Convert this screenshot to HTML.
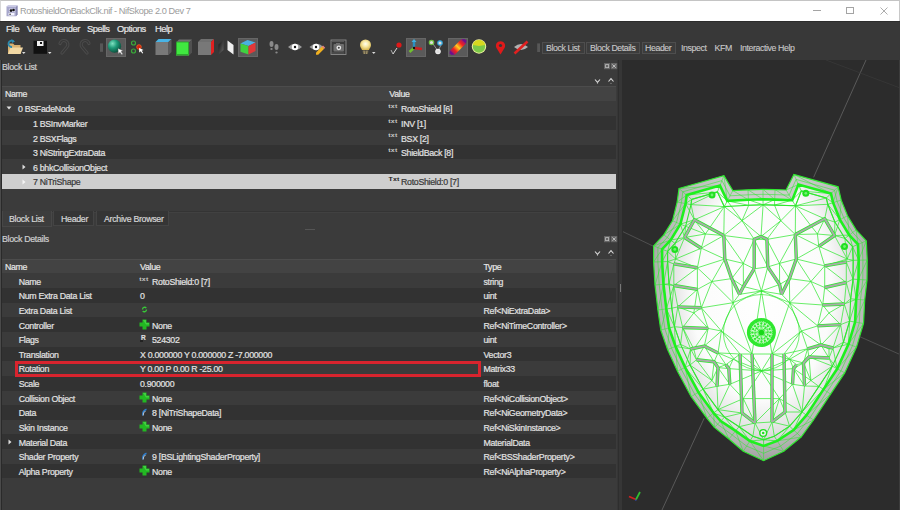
<!DOCTYPE html><html><head><meta charset="utf-8"><style>
*{margin:0;padding:0;box-sizing:border-box}
html,body{width:900px;height:510px;overflow:hidden;background:#3b3b3b;font-family:"Liberation Sans",sans-serif;font-size:9px;letter-spacing:-0.35px}
.a{position:absolute}
.t{position:absolute;white-space:nowrap;line-height:10px;-webkit-text-stroke:0.2px currentColor}
#title{left:0;top:0;width:900px;height:21px;background:#fff;border-top:1px solid #c4c4c4;border-right:1px solid #c8c8c8;border-left:1px solid #d8d8d8}
.hdr{position:absolute;left:2px;width:614px;background:#434343}
.rw{position:absolute;left:2px;width:614px}
.odd{background:#323232}
.sel{background:#cecece}
.tb{position:absolute;top:41.6px;height:12.2px;border:1px solid #4e4e4e;background:#3c3c3c}
.dockbtn{position:absolute;width:6px;height:6px;background:#5a5a5a}
</style></head><body>
<div id="title" class="a"></div>
<svg class="a" style="left:5.5px;top:4.5px" width="12" height="12" viewBox="0 0 12 12"><path d="M0.5 1.5l1.5-1h9.5v9l-1.5 1.8H0.5z" fill="#a8a8cc"/><path d="M2 0.5h9.5l-1.5 1.5H0.5z" fill="#c8c8e4"/><path d="M10 2l1.5-1.5v9L10 11.3z" fill="#8888b0"/><rect x="3" y="3.5" width="6" height="3.8" fill="#d0d0e8"/><circle cx="5" cy="5.6" r="1.3" fill="#111"/><circle cx="7.5" cy="5" r="1.3" fill="#111"/><rect x="2.5" y="8" width="6" height="2.5" fill="#f4f4ff"/><rect x="3.5" y="8.6" width="1.2" height="1.4" fill="#333"/></svg>
<div class="t" style="left:20px;top:5.5px;color:#9c9c9c;font-size:9.2px;letter-spacing:-0.42px;-webkit-text-stroke:0">RotoshieldOnBackClk.nif - NifSkope 2.0 Dev 7</div>
<div class="a" style="left:813px;top:10px;width:7.6px;height:1px;background:#a4a4a4;"></div>
<div class="a" style="left:846px;top:6.8px;width:7.6px;height:7.6px;border:1px solid #a4a4a4"></div>
<svg class="a" style="left:879.5px;top:6.5px" width="9" height="9"><path d="M0.5 0.5L7.5 7.5M7.5 0.5L0.5 7.5" stroke="#a4a4a4" stroke-width="0.9"/></svg>
<div class="a" style="left:0px;top:21px;width:900px;height:39px;background:#383838;"></div>
<div class="a" style="left:0px;top:21px;width:900px;height:0.8px;background:#2c2c2c;"></div>
<div class="t" style="left:6px;top:23.5px;color:#e4e4e4;font-size:9.4px;letter-spacing:-0.5px">File</div>
<div class="t" style="left:27px;top:23.5px;color:#e4e4e4;font-size:9.4px;letter-spacing:-0.5px">View</div>
<div class="t" style="left:52px;top:23.5px;color:#e4e4e4;font-size:9.4px;letter-spacing:-0.5px">Render</div>
<div class="t" style="left:87px;top:23.5px;color:#e4e4e4;font-size:9.4px;letter-spacing:-0.5px">Spells</div>
<div class="t" style="left:117px;top:23.5px;color:#e4e4e4;font-size:9.4px;letter-spacing:-0.5px">Options</div>
<div class="t" style="left:155px;top:23.5px;color:#e4e4e4;font-size:9.4px;letter-spacing:-0.5px">Help</div>
<div class="a" style="left:106px;top:37.6px;width:20px;height:19.7px;background:#5a5a5a;border:1px solid #666"></div>
<div class="a" style="left:238px;top:37.6px;width:20px;height:19.7px;background:#5a5a5a;border:1px solid #666"></div>
<div class="a" style="left:406px;top:37.6px;width:20px;height:19.7px;background:#5a5a5a;border:1px solid #666"></div>
<div class="a" style="left:448px;top:37.6px;width:20px;height:19.7px;background:#5a5a5a;border:1px solid #666"></div>
<svg class="a" style="left:0;top:0" width="900" height="60" viewBox="0 0 900 60">
<path d="M8 43.5h5l1.5 1.5H20.5v9H8z" fill="#d8b070"/><path d="M8 54l2.5-6.5H23l-2.5 6.5z" fill="#f2d8a4"/>
<path d="M13.5 41.2a3.2 3.2 0 1 0 -1.5 5.8" fill="none" stroke="#2a8ab0" stroke-width="1.8"/><path d="M11.5 39l3.5 2.5-3 1.5z" fill="#2a8ab0"/>
<path d="M22 52h3.5l-1.75 2z" fill="#ddd"/>
<rect x="33.5" y="40.8" width="13.5" height="13" fill="#111"/><rect x="37" y="41" width="6.5" height="5" fill="#f0f0f0"/><rect x="40" y="42" width="2" height="2" fill="#111"/>
<path d="M48 52h3.5l-1.75 2z" fill="#ddd"/>
<path d="M62 53 L67 47 A4 4 0 1 0 60 43.5" fill="none" stroke="#4c4c4c" stroke-width="3.2" stroke-linecap="round"/><path d="M62 53 L67 47 A4 4 0 1 0 60 43.5" fill="none" stroke="#383838" stroke-width="1.2" stroke-linecap="round"/>
<path d="M87 53 L82 47 A4 4 0 1 1 89 43.5" fill="none" stroke="#4c4c4c" stroke-width="3.2" stroke-linecap="round"/><path d="M87 53 L82 47 A4 4 0 1 1 89 43.5" fill="none" stroke="#383838" stroke-width="1.2" stroke-linecap="round"/>
<rect x="100" y="43.4" width="3" height="8.4" fill="#575757"/>
<defs><radialGradient id="gs" cx="0.35" cy="0.3" r="0.75"><stop offset="0" stop-color="#7fe0c0"/><stop offset="0.45" stop-color="#1f9a78"/><stop offset="1" stop-color="#0a4a38"/></radialGradient></defs>
<circle cx="114.5" cy="46.2" r="6.6" fill="url(#gs)"/>
<path d="M118 48.5l5 2.3-2 0.8 1.8 2.5-1 .7-1.8-2.5-1.6 1.5z" fill="#fff" stroke="#555" stroke-width="0.3"/>
<circle cx="133.5" cy="43" r="2" fill="none" stroke="#3aa83a" stroke-width="1.2"/><circle cx="133.5" cy="51" r="2" fill="none" stroke="#3aa83a" stroke-width="1.2"/><circle cx="139" cy="47" r="2.3" fill="#d02010" stroke="#f06020" stroke-width="0.8"/>
<path d="M139 48l4.5 2-1.8 0.7 1.5 2.3-0.9 .6-1.5-2.3-1.5 1.3z" fill="#fff"/>
<path d="M155.5 42.0l3-3h13l-3 3z" fill="#49b4e6"/><rect x="155.5" y="42.0" width="13" height="13" fill="#787878"/><path d="M168.5 42.0l3-3v13l-3 3z" fill="#5a5a5a"/>
<path d="M176 42.5l3-3h13l-3 3z" fill="#707070"/><rect x="176" y="42.5" width="13" height="13" fill="#46e046"/><path d="M189 42.5l3-3v13l-3 3z" fill="#505050"/>
<rect x="176.5" y="42" width="12" height="12.5" fill="#40e840" stroke="#2a9a2a" stroke-width="0.8"/>
<path d="M198 42.0l3-3h13l-3 3z" fill="#707070"/><rect x="198" y="42.0" width="13" height="13" fill="#787878"/><path d="M211 42.0l3-3v13l-3 3z" fill="#e02020"/>
<defs><linearGradient id="dp" x1="0" y1="0" x2="1" y2="1"><stop offset="0" stop-color="#111"/><stop offset="1" stop-color="#6a6a6a"/></linearGradient></defs><path d="M218.5 44.5l5-4.5v10l-5 4.5z" fill="url(#dp)"/><path d="M227.5 40.5l6 4.5v9.5l-6-4.5z" fill="#f0f0f0"/>
<path d="M240.5 43.5l7-3.5 8 2.5-7 3.5z" fill="#4ab0e0"/><path d="M240.5 43.5l8 2.5v8.5l-8-2.8z" fill="#40d040"/><path d="M248.5 46l7-3.5v8.5l-7 3.5z" fill="#e03838"/>
<ellipse cx="271.5" cy="44" rx="2" ry="3" fill="#8a8a8a"/><ellipse cx="271.5" cy="49" rx="1.2" ry="1" fill="#8a8a8a"/><ellipse cx="276.5" cy="47" rx="2" ry="3" fill="#8a8a8a"/><ellipse cx="276.5" cy="52.5" rx="1.2" ry="1" fill="#8a8a8a"/>
<path d="M288 47 Q295 40.5 302 47 Q295 53.5 288 47z" fill="#9c9c9c"/><circle cx="295" cy="47" r="3.2" fill="#fff"/><circle cx="295" cy="47" r="1.2" fill="#111"/>
<path d="M309.5 47 Q316.5 40.5 323.5 47 Q316.5 53.5 309.5 47z" fill="#9c9c9c"/><circle cx="316" cy="47" r="3.2" fill="#fff"/><circle cx="316" cy="47" r="1.2" fill="#111"/><path d="M316 52.5l6-6 2.2 2.2-6 6h-2.2z" fill="#f0b020"/><path d="M322 46.5l1-1 2.2 2.2-1 1z" fill="#f08080"/>
<rect x="331" y="40" width="15" height="14.5" fill="#3a3a3a" stroke="#8c8c8c" stroke-width="0.9"/><path d="M332.5 41.5h12M332.5 53h12" stroke="#777" stroke-width="1.2" stroke-dasharray="1 1"/><rect x="333.5" y="44" width="10.5" height="7.5" rx="1" fill="#6e6e6e"/><rect x="336" y="43" width="4" height="1.5" fill="#6e6e6e"/><circle cx="338.8" cy="47.8" r="2.4" fill="#e8e8e8"/><circle cx="338.8" cy="47.8" r="1" fill="#444"/>
<defs><radialGradient id="lb" cx="0.5" cy="0.42" r="0.58"><stop offset="0" stop-color="#fffef0"/><stop offset="0.45" stop-color="#f8eaa8"/><stop offset="1" stop-color="#d8b850"/></radialGradient></defs>
<path d="M360 45a5.5 5.5 0 1 1 11 0c0 2.2-1.5 3.2-2 5h-7c-.5-1.8-2-2.8-2-5z" fill="url(#lb)"/><path d="M362.5 50.5h6l-0.6 3.5h-4.8z" fill="#6a6048"/><path d="M364 50.5l0.5 3.5M367 50.5l-0.5 3.5" stroke="#d8c890" stroke-width="0.5"/><path d="M372 52h3.5l-1.75 2z" fill="#ddd"/>
<path d="M393 54l-2-4" stroke="#bbb" stroke-width="0.9"/><path d="M393 54l4-6" stroke="#ddd" stroke-width="1"/><circle cx="399" cy="45" r="2.6" fill="#e01818"/>
<path d="M414 48v-7" stroke="#2a90c0" stroke-width="2.4"/><path d="M411.5 42l2.5-3 2.5 3z" fill="#40b0e0"/><path d="M414 48l8 1" stroke="#d02020" stroke-width="2.4"/><path d="M414 48l-4.5 4" stroke="#70c030" stroke-width="2.4"/><circle cx="414" cy="48" r="1.2" fill="#111"/>
<path d="M432 42.5l6 8.5 4-8" stroke="#aaa" stroke-width="0.8" fill="none"/><circle cx="431.5" cy="42.5" r="2.2" fill="#ddd" stroke="#70c040" stroke-width="1.2"/><circle cx="440" cy="43" r="2.2" fill="#ddd" stroke="#30a8e0" stroke-width="1.2"/><circle cx="438" cy="51.5" r="2.2" fill="#ddd" stroke="#eee" stroke-width="1.2"/>
<defs><linearGradient id="hb" x1="0" y1="1" x2="1" y2="0"><stop offset="0" stop-color="#6010a0"/><stop offset="0.3" stop-color="#f02020"/><stop offset="0.5" stop-color="#ffd020"/><stop offset="0.7" stop-color="#f02020"/><stop offset="1" stop-color="#6010a0"/></linearGradient></defs>
<path d="M450 50.5l11.5-11.5 4.5 4.5-11.5 11.5z" fill="url(#hb)"/><path d="M450 50.5l-0.5 3 2 1.5 3-0.5z" fill="#6a1090"/><path d="M466 43.5l0.5-3-2-1.5-3 0.5z" fill="#6a1090"/>
<circle cx="479" cy="46.5" r="7.2" fill="#f0f0a0"/><circle cx="479" cy="46.5" r="6.2" fill="#7cc848"/><path d="M472.9 45a6.2 6.2 0 0 1 12.2 0l-6.1 1z" fill="#d8d820"/>
<path d="M500.5 54.5l-4-6.5a4.6 4.6 0 1 1 8 0z" fill="#e01a1a"/><circle cx="500.5" cy="45.5" r="1.6" fill="#383838"/>
<path d="M514 47 Q521 41 528 47 Q521 53 514 47z" fill="#b0b0b0"/><path d="M514.5 53.5l13-12" stroke="#e02020" stroke-width="2.6"/>
<rect x="537.2" y="43.4" width="2.8" height="8.6" fill="#575757"/>
</svg>
<div class="tb" style="left:542.2px;width:42.5px"></div>
<div class="t" style="left:546px;top:42.8px;color:#cacaca;font-size:8.8px;letter-spacing:-0.42px;-webkit-text-stroke:0.1px currentColor">Block List</div>
<div class="tb" style="left:586px;width:54px"></div>
<div class="t" style="left:590px;top:42.8px;color:#cacaca;font-size:8.8px;letter-spacing:-0.42px;-webkit-text-stroke:0.1px currentColor">Block Details</div>
<div class="tb" style="left:642px;width:33.5px"></div>
<div class="t" style="left:645px;top:42.8px;color:#cacaca;font-size:8.8px;letter-spacing:-0.42px;-webkit-text-stroke:0.1px currentColor">Header</div>
<div class="t" style="left:681px;top:42.8px;color:#cacaca;font-size:8.8px;letter-spacing:-0.42px;-webkit-text-stroke:0.1px currentColor">Inspect</div>
<div class="t" style="left:714.5px;top:42.8px;color:#cacaca;font-size:8.8px;letter-spacing:-0.42px;-webkit-text-stroke:0.1px currentColor">KFM</div>
<div class="t" style="left:740px;top:42.8px;color:#cacaca;font-size:8.8px;letter-spacing:-0.42px;-webkit-text-stroke:0.1px currentColor">Interactive Help</div>
<div class="a" style="left:0px;top:60px;width:2px;height:450px;background:#2a2a2a;"></div>
<div class="a" style="left:0px;top:60px;width:1px;height:450px;background:#4a4a4a;"></div>
<div class="a" style="left:617px;top:60px;width:5px;height:450px;background:#363636;"></div>
<div class="a" style="left:617.5px;top:60px;width:1px;height:450px;background:#2e2e2e;"></div>
<div class="t" style="left:2px;top:62px;color:#cfcfcf;font-size:8.8px;letter-spacing:-0.3px">Block List</div>
<svg class="a" style="left:604px;top:63px" width="14" height="7"><rect x="0" y="0" width="6.2" height="6.2" fill="#666"/><rect x="1.6" y="1.6" width="3" height="3" fill="none" stroke="#bbb" stroke-width="0.8"/><rect x="7" y="0" width="6.2" height="6.2" fill="#666"/><path d="M8.4 1.4l3.4 3.4M11.8 1.4l-3.4 3.4" stroke="#c8c8c8" stroke-width="0.9"/></svg>
<svg class="a" style="left:594px;top:77px" width="20" height="8"><path d="M1 2.5l2.5 2.8 2.5-2.8" fill="none" stroke="#d8d8d8" stroke-width="1.1"/><path d="M14.5 4.5l2.5-2.8 2.5 2.8" fill="none" stroke="#d8d8d8" stroke-width="1.1"/><circle cx="3.5" cy="6.5" r="0.6" fill="#999"/><circle cx="17" cy="6.3" r="0.6" fill="#999"/></svg>
<div class="hdr" style="top:85.8px;height:15.200000000000003px"></div>
<div class="a" style="left:2px;top:85.8px;width:614px;height:1px;background:#4c4c4c;"></div>
<div class="t" style="left:4.9px;top:89.2px;color:#e6e6e6;font-size:8.8px;letter-spacing:-0.3px">Name</div>
<div class="t" style="left:389.3px;top:89.2px;color:#e6e6e6;font-size:8.8px;letter-spacing:-0.3px">Value</div>
<div class="t" style="left:18px;top:104.4px;color:#e2e2e2;font-size:8.8px;letter-spacing:-0.3px">0 BSFadeNode</div>
<svg class="a" style="left:6px;top:106.0px" width="7" height="5"><path d="M0.5 0.5h5l-2.5 3z" fill="#ddd"/></svg>
<div class="t" style="left:388.3px;top:104.2px;color:#c8c8c8;font-size:7px;letter-spacing:0.2px;line-height:6px;font-weight:bold;-webkit-text-stroke:0;transform:scaleY(0.78);transform-origin:0 0">txt</div>
<div class="t" style="left:401px;top:104.4px;color:#e2e2e2;font-size:8.8px;letter-spacing:-0.3px">RotoShield [6]</div>
<div class="rw odd" style="top:115.6px;height:14.6px"></div>
<div class="t" style="left:33px;top:119.0px;color:#e2e2e2;font-size:8.8px;letter-spacing:-0.3px">1 BSInvMarker</div>
<div class="t" style="left:388.3px;top:118.8px;color:#c8c8c8;font-size:7px;letter-spacing:0.2px;line-height:6px;font-weight:bold;-webkit-text-stroke:0;transform:scaleY(0.78);transform-origin:0 0">txt</div>
<div class="t" style="left:401px;top:119.0px;color:#e2e2e2;font-size:8.8px;letter-spacing:-0.3px">INV [1]</div>
<div class="t" style="left:33px;top:133.6px;color:#e2e2e2;font-size:8.8px;letter-spacing:-0.3px">2 BSXFlags</div>
<div class="t" style="left:388.3px;top:133.39999999999998px;color:#c8c8c8;font-size:7px;letter-spacing:0.2px;line-height:6px;font-weight:bold;-webkit-text-stroke:0;transform:scaleY(0.78);transform-origin:0 0">txt</div>
<div class="t" style="left:401px;top:133.6px;color:#e2e2e2;font-size:8.8px;letter-spacing:-0.3px">BSX [2]</div>
<div class="rw odd" style="top:144.8px;height:14.6px"></div>
<div class="t" style="left:33px;top:148.20000000000002px;color:#e2e2e2;font-size:8.8px;letter-spacing:-0.3px">3 NiStringExtraData</div>
<div class="t" style="left:388.3px;top:148.0px;color:#c8c8c8;font-size:7px;letter-spacing:0.2px;line-height:6px;font-weight:bold;-webkit-text-stroke:0;transform:scaleY(0.78);transform-origin:0 0">txt</div>
<div class="t" style="left:401px;top:148.20000000000002px;color:#e2e2e2;font-size:8.8px;letter-spacing:-0.3px">ShieldBack [8]</div>
<div class="t" style="left:33px;top:162.8px;color:#e2e2e2;font-size:8.8px;letter-spacing:-0.3px">6 bhkCollisionObject</div>
<svg class="a" style="left:21.5px;top:163.9px" width="5" height="7"><path d="M0.5 0.5v5l3-2.5z" fill="#ddd"/></svg>
<div class="rw sel" style="top:174.0px;height:14.6px"></div>
<div class="t" style="left:33px;top:177.4px;color:#383838;font-size:8.8px;letter-spacing:-0.3px">7 NiTriShape</div>
<svg class="a" style="left:21.5px;top:178.5px" width="5" height="7"><path d="M0.5 0.5v5l3-2.5z" fill="#f4f4f4"/></svg>
<div class="t" style="left:388.5px;top:177.0px;color:#1a1a1a;font-size:7px;letter-spacing:0.2px;line-height:6px;font-weight:bold;-webkit-text-stroke:0;transform:scaleY(0.78);transform-origin:0 0">Txt</div>
<div class="t" style="left:401px;top:177.4px;color:#383838;font-size:8.8px;letter-spacing:-0.3px">RotoShield:0 [7]</div>
<div class="a" style="left:2px;top:210.8px;width:615px;height:1px;background:#343434;"></div>
<div class="a" style="left:2px;top:212px;width:615px;height:0.8px;background:#414141;"></div>
<div class="a" style="left:2px;top:211px;width:50px;height:16px;background:#3d3d3d;border:1px solid #474747;border-top:none"></div>
<div class="a" style="left:53px;top:211px;width:41px;height:15px;background:#353535;border:1px solid #444;border-top:none"></div>
<div class="a" style="left:96px;top:211px;width:73px;height:15px;background:#353535;border:1px solid #444;border-top:none"></div>
<div class="t" style="left:9px;top:214px;color:#d6d6d6;font-size:8.8px;letter-spacing:-0.3px">Block List</div>
<div class="t" style="left:61px;top:214px;color:#d6d6d6;font-size:8.8px;letter-spacing:-0.3px">Header</div>
<div class="t" style="left:104px;top:214px;color:#d6d6d6;font-size:8.8px;letter-spacing:-0.3px">Archive Browser</div>
<div class="a" style="left:304.5px;top:229.2px;width:10.5px;height:1.2px;background:#555;"></div>
<div class="t" style="left:2px;top:233.9px;color:#cfcfcf;font-size:8.8px;letter-spacing:-0.3px">Block Details</div>
<svg class="a" style="left:604px;top:235.5px" width="14" height="7"><rect x="0" y="0" width="6.2" height="6.2" fill="#666"/><rect x="1.6" y="1.6" width="3" height="3" fill="none" stroke="#bbb" stroke-width="0.8"/><rect x="7" y="0" width="6.2" height="6.2" fill="#666"/><path d="M8.4 1.4l3.4 3.4M11.8 1.4l-3.4 3.4" stroke="#c8c8c8" stroke-width="0.9"/></svg>
<svg class="a" style="left:594px;top:249px" width="20" height="8"><path d="M1 2.5l2.5 2.8 2.5-2.8" fill="none" stroke="#d8d8d8" stroke-width="1.1"/><path d="M14.5 4.5l2.5-2.8 2.5 2.8" fill="none" stroke="#d8d8d8" stroke-width="1.1"/><circle cx="3.5" cy="6.5" r="0.6" fill="#999"/><circle cx="17" cy="6.3" r="0.6" fill="#999"/></svg>
<div class="hdr" style="top:259.3px;height:14.199999999999989px"></div>
<div class="a" style="left:2px;top:259.3px;width:614px;height:1px;background:#4c4c4c;"></div>
<div class="t" style="left:4.9px;top:262.4px;color:#e6e6e6;font-size:8.8px;letter-spacing:-0.3px">Name</div>
<div class="t" style="left:140px;top:262.4px;color:#e6e6e6;font-size:8.8px;letter-spacing:-0.3px">Value</div>
<div class="t" style="left:483.5px;top:262.4px;color:#e6e6e6;font-size:8.8px;letter-spacing:-0.3px">Type</div>
<div class="t" style="left:18.7px;top:276.7px;color:#e2e2e2;font-size:8.8px;letter-spacing:-0.3px">Name</div>
<div class="t" style="left:139.3px;top:276.9px;color:#c8c8c8;font-size:7px;letter-spacing:0.2px;line-height:6px;font-weight:bold;-webkit-text-stroke:0;transform:scaleY(0.78);transform-origin:0 0">txt</div>
<div class="t" style="left:152px;top:276.7px;color:#e2e2e2;font-size:8.8px;letter-spacing:-0.3px">RotoShield:0 [7]</div>
<div class="t" style="left:483.5px;top:276.7px;color:#e2e2e2;font-size:8.8px;letter-spacing:-0.3px">string</div>
<div class="rw odd" style="top:288.13px;height:14.63px"></div>
<div class="t" style="left:18.7px;top:291.33px;color:#e2e2e2;font-size:8.8px;letter-spacing:-0.3px">Num Extra Data List</div>
<div class="t" style="left:140px;top:291.33px;color:#e2e2e2;font-size:8.8px;letter-spacing:-0.3px">0</div>
<div class="t" style="left:483.5px;top:291.33px;color:#e2e2e2;font-size:8.8px;letter-spacing:-0.3px">uint</div>
<div class="t" style="left:18.7px;top:305.96px;color:#e2e2e2;font-size:8.8px;letter-spacing:-0.3px">Extra Data List</div>
<svg class="a" style="left:141px;top:305.76px" width="8" height="8"><path d="M1.5 3.5a2.2 2.2 0 0 1 3.8-1.5M5.5 3.5a2.2 2.2 0 0 1-3.8 1.5" fill="none" stroke="#38c838" stroke-width="1.3"/></svg>
<div class="t" style="left:483.5px;top:305.96px;color:#e2e2e2;font-size:8.8px;letter-spacing:-0.3px">Ref&lt;NiExtraData&gt;</div>
<div class="rw odd" style="top:317.39px;height:14.63px"></div>
<div class="t" style="left:18.7px;top:320.59px;color:#e2e2e2;font-size:8.8px;letter-spacing:-0.3px">Controller</div>
<svg class="a" style="left:138.5px;top:318.59px" width="11" height="11"><path d="M3.5 0.5h4v3h3v4h-3v3h-4v-3h-3v-4h3z" fill="#22b822"/><path d="M4 1h3v3h3v1.5h-3" fill="#40d040"/></svg>
<div class="t" style="left:152px;top:320.59px;color:#e2e2e2;font-size:8.8px;letter-spacing:-0.3px">None</div>
<div class="t" style="left:483.5px;top:320.59px;color:#e2e2e2;font-size:8.8px;letter-spacing:-0.3px">Ref&lt;NiTimeController&gt;</div>
<div class="t" style="left:18.7px;top:335.21999999999997px;color:#e2e2e2;font-size:8.8px;letter-spacing:-0.3px">Flags</div>
<div class="t" style="left:141px;top:335.02px;color:#ddd;font-size:6.5px;line-height:6px;font-weight:bold;letter-spacing:0">R</div><div class="a" style="left:140px;top:339.52px;width:3px;height:2px;background:#222"></div>
<div class="t" style="left:152px;top:335.21999999999997px;color:#e2e2e2;font-size:8.8px;letter-spacing:-0.3px">524302</div>
<div class="t" style="left:483.5px;top:335.21999999999997px;color:#e2e2e2;font-size:8.8px;letter-spacing:-0.3px">uint</div>
<div class="rw odd" style="top:346.65px;height:14.63px"></div>
<div class="t" style="left:18.7px;top:349.84999999999997px;color:#e2e2e2;font-size:8.8px;letter-spacing:-0.3px">Translation</div>
<div class="t" style="left:140px;top:349.84999999999997px;color:#e2e2e2;font-size:8.8px;letter-spacing:-0.3px">X 0.000000 Y 0.000000 Z -7.000000</div>
<div class="t" style="left:483.5px;top:349.84999999999997px;color:#e2e2e2;font-size:8.8px;letter-spacing:-0.3px">Vector3</div>
<div class="t" style="left:18.7px;top:364.47999999999996px;color:#e2e2e2;font-size:8.8px;letter-spacing:-0.3px">Rotation</div>
<div class="t" style="left:140px;top:364.47999999999996px;color:#e2e2e2;font-size:8.8px;letter-spacing:-0.3px">Y 0.00 P 0.00 R -25.00</div>
<div class="t" style="left:483.5px;top:364.47999999999996px;color:#e2e2e2;font-size:8.8px;letter-spacing:-0.3px">Matrix33</div>
<div class="rw odd" style="top:375.91px;height:14.63px"></div>
<div class="t" style="left:18.7px;top:379.11px;color:#e2e2e2;font-size:8.8px;letter-spacing:-0.3px">Scale</div>
<div class="t" style="left:140px;top:379.11px;color:#e2e2e2;font-size:8.8px;letter-spacing:-0.3px">0.900000</div>
<div class="t" style="left:483.5px;top:379.11px;color:#e2e2e2;font-size:8.8px;letter-spacing:-0.3px">float</div>
<div class="t" style="left:18.7px;top:393.74px;color:#e2e2e2;font-size:8.8px;letter-spacing:-0.3px">Collision Object</div>
<svg class="a" style="left:138.5px;top:391.74px" width="11" height="11"><path d="M3.5 0.5h4v3h3v4h-3v3h-4v-3h-3v-4h3z" fill="#22b822"/><path d="M4 1h3v3h3v1.5h-3" fill="#40d040"/></svg>
<div class="t" style="left:152px;top:393.74px;color:#e2e2e2;font-size:8.8px;letter-spacing:-0.3px">None</div>
<div class="t" style="left:483.5px;top:393.74px;color:#e2e2e2;font-size:8.8px;letter-spacing:-0.3px">Ref&lt;NiCollisionObject&gt;</div>
<div class="rw odd" style="top:405.17px;height:14.63px"></div>
<div class="t" style="left:18.7px;top:408.37px;color:#e2e2e2;font-size:8.8px;letter-spacing:-0.3px">Data</div>
<svg class="a" style="left:141px;top:407.67px" width="8" height="9"><path d="M2 7.5 Q1 3 5.5 1.2" fill="none" stroke="#3080d0" stroke-width="1.5"/><path d="M2.2 7.5 Q2 4.5 4.5 3" fill="none" stroke="#ddd" stroke-width="0.8"/></svg>
<div class="t" style="left:152px;top:408.37px;color:#e2e2e2;font-size:8.8px;letter-spacing:-0.3px">8 [NiTriShapeData]</div>
<div class="t" style="left:483.5px;top:408.37px;color:#e2e2e2;font-size:8.8px;letter-spacing:-0.3px">Ref&lt;NiGeometryData&gt;</div>
<div class="t" style="left:18.7px;top:423.0px;color:#e2e2e2;font-size:8.8px;letter-spacing:-0.3px">Skin Instance</div>
<svg class="a" style="left:138.5px;top:421.0px" width="11" height="11"><path d="M3.5 0.5h4v3h3v4h-3v3h-4v-3h-3v-4h3z" fill="#22b822"/><path d="M4 1h3v3h3v1.5h-3" fill="#40d040"/></svg>
<div class="t" style="left:152px;top:423.0px;color:#e2e2e2;font-size:8.8px;letter-spacing:-0.3px">None</div>
<div class="t" style="left:483.5px;top:423.0px;color:#e2e2e2;font-size:8.8px;letter-spacing:-0.3px">Ref&lt;NiSkinInstance&gt;</div>
<div class="rw odd" style="top:434.43px;height:14.63px"></div>
<div class="t" style="left:18.7px;top:437.63px;color:#e2e2e2;font-size:8.8px;letter-spacing:-0.3px">Material Data</div>
<svg class="a" style="left:8px;top:438.93px" width="5" height="7"><path d="M0.5 0.5v5l3-2.5z" fill="#ddd"/></svg>
<div class="t" style="left:483.5px;top:437.63px;color:#e2e2e2;font-size:8.8px;letter-spacing:-0.3px">MaterialData</div>
<div class="t" style="left:18.7px;top:452.26px;color:#e2e2e2;font-size:8.8px;letter-spacing:-0.3px">Shader Property</div>
<svg class="a" style="left:141px;top:451.56px" width="8" height="9"><path d="M2 7.5 Q1 3 5.5 1.2" fill="none" stroke="#3080d0" stroke-width="1.5"/><path d="M2.2 7.5 Q2 4.5 4.5 3" fill="none" stroke="#ddd" stroke-width="0.8"/></svg>
<div class="t" style="left:152px;top:452.26px;color:#e2e2e2;font-size:8.8px;letter-spacing:-0.3px">9 [BSLightingShaderProperty]</div>
<div class="t" style="left:483.5px;top:452.26px;color:#e2e2e2;font-size:8.8px;letter-spacing:-0.3px">Ref&lt;BSShaderProperty&gt;</div>
<div class="rw odd" style="top:463.69px;height:14.63px"></div>
<div class="t" style="left:18.7px;top:466.89px;color:#e2e2e2;font-size:8.8px;letter-spacing:-0.3px">Alpha Property</div>
<svg class="a" style="left:138.5px;top:464.89px" width="11" height="11"><path d="M3.5 0.5h4v3h3v4h-3v3h-4v-3h-3v-4h3z" fill="#22b822"/><path d="M4 1h3v3h3v1.5h-3" fill="#40d040"/></svg>
<div class="t" style="left:152px;top:466.89px;color:#e2e2e2;font-size:8.8px;letter-spacing:-0.3px">None</div>
<div class="t" style="left:483.5px;top:466.89px;color:#e2e2e2;font-size:8.8px;letter-spacing:-0.3px">Ref&lt;NiAlphaProperty&gt;</div>
<div class="a" style="left:14.5px;top:361.4px;width:466.3px;height:16.1px;border:3px solid #d8242e"></div>
<div class="a" style="left:619.5px;top:283.5px;width:1px;height:8.5px;background:#777;"></div>
<div class="a" style="left:622px;top:60px;width:277px;height:450px;background:#2c2c2c;overflow:hidden"></div>
<div class="a" style="left:899px;top:60px;width:1px;height:450px;background:#3c3c3c;"></div>
<svg class="a" style="left:0;top:0" width="900" height="510" viewBox="0 0 900 510">
<defs>
<radialGradient id="shin" gradientUnits="userSpaceOnUse" cx="0" cy="0" r="1" gradientTransform="translate(762 292) scale(100 155)"><stop offset="0" stop-color="#ffffff"/><stop offset="0.7" stop-color="#fbfbfb"/><stop offset="0.9" stop-color="#e2e2e2"/><stop offset="1" stop-color="#cacaca"/></radialGradient>
<radialGradient id="rim" gradientUnits="userSpaceOnUse" cx="0" cy="0" r="1" gradientTransform="translate(762 290) scale(118 175)"><stop offset="0" stop-color="#d4d4d4"/><stop offset="0.7" stop-color="#cacaca"/><stop offset="0.86" stop-color="#bababa"/><stop offset="1" stop-color="#9a9a9a"/></radialGradient>
<clipPath id="vclip"><rect x="622" y="60" width="277" height="450"/></clipPath>
</defs>
<g clip-path="url(#vclip)">
<line x1="866" y1="60" x2="813.6" y2="177.3" stroke="#626262" stroke-width="0.85"/>
<line x1="826" y1="60" x2="900" y2="88" stroke="#383838" stroke-width="0.8"/>
<line x1="623" y1="231.7" x2="655" y2="247" stroke="#555555" stroke-width="0.85"/>
<line x1="704.2" y1="418.2" x2="662" y2="510" stroke="#626262" stroke-width="0.85"/>
<line x1="859.4" y1="336.5" x2="900" y2="354.5" stroke="#555555" stroke-width="0.85"/>
<path d="M629 496.5l7 3" stroke="#d02020" stroke-width="1.7"/><path d="M636 499.5l4-7.5" stroke="#30c030" stroke-width="1.7"/><path d="M636 499.5l-0.5 1" stroke="#3050d0" stroke-width="1.5"/>
<polygon points="679.0,188.5 723.9,175.6 732.8,190.6 748.0,189.8 763.0,189.3 775.0,189.6 786.1,190.0 793.9,174.4 838.1,186.8 841.2,200.1 847.5,215.8 856.1,229.9 866.3,240.9 867.2,260.0 867.0,280.0 864.7,300.0 863.5,323.5 856.5,347.1 844.7,372.9 830.6,394.1 813.5,420.0 801.1,437.0 783.8,451.3 763.6,460.7 743.3,451.3 728.9,439.0 714.4,427.4 706.9,418.2 691.2,396.7 677.5,371.2 667.6,349.6 660.8,330.0 657.9,310.0 655.0,285.0 653.6,262.0 653.6,245.9 663.8,234.9 672.5,220.8 677.2,202.0" fill="url(#rim)"/>
<polygon points="686.7,195.1 719.9,185.6 727.3,200.9 748.4,199.8 763.0,199.3 774.7,199.6 792.2,200.2 798.4,184.5 831.0,193.6 833.1,202.7 839.9,219.6 849.3,235.1 858.0,244.4 858.7,260.2 858.5,279.5 856.2,299.3 855.1,322.1 848.5,344.1 837.2,368.8 823.5,389.4 806.5,415.2 793.6,430.0 777.3,440.9 763.6,445.9 749.9,441.0 735.6,430.9 720.7,421.1 713.6,413.0 698.4,392.2 685.1,367.4 675.5,346.4 669.1,328.0 666.3,308.9 663.5,284.3 662.1,261.7 662.1,249.2 670.6,240.1 680.4,224.1 685.6,203.6" fill="url(#shin)"/>
<path d="M679.0 188.5L686.6906500866846 195.13429463915708M679.0 188.5L719.9389959892247 185.58187454689056M723.9 175.6L719.9389959892247 185.58187454689056M723.9 175.6L727.2859927697162 200.90405174393095M732.8 190.6L727.2859927697162 200.90405174393095M732.8 190.6L748.4294081460685 199.7912404083335M748 189.8L748.4294081460685 199.7912404083335M748 189.8L763.0416485942482 199.3041657267275M763 189.3L763.0416485942482 199.3041657267275M763 189.3L774.6949664705575 199.5954986736352M775 189.6L774.6949664705575 199.5954986736352M775 189.6L792.1677653457234 200.22514908355112M786.1 190L792.1677653457234 200.22514908355112M786.1 190L798.3631558863212 184.4802660361057M793.9 174.4L798.3631558863212 184.4802660361057M793.9 174.4L830.9631778664647 193.62597355994683M838.1 186.8L830.9631778664647 193.62597355994683M838.1 186.8L833.0694063845153 202.662373330938M841.2 200.1L833.0694063845153 202.662373330938M841.2 200.1L839.8748923708175 219.62207650315167M847.5 215.8L839.8748923708175 219.62207650315167M847.5 215.8L849.287361484147 235.05414795640107M856.1 229.9L849.287361484147 235.05414795640107M856.1 229.9L857.9555960185011 244.4022440228614M866.3 240.9L857.9555960185011 244.4022440228614M866.3 240.9L858.697998306957 260.15767036675726M867.2 260L858.697998306957 260.15767036675726M867.2 260L858.5048699294302 279.47050811942734M867.0 280L858.5048699294302 279.47050811942734M867.0 280L856.2248229788311 299.29700334202914M864.7 300L856.2248229788311 299.29700334202914M864.7 300L855.0627405417265 322.05445106865795M863.5 323.5L855.0627405417265 322.05445106865795M863.5 323.5L848.5211367777798 344.1090009013925M856.5 347.1L848.5211367777798 344.1090009013925M856.5 347.1L837.249906218299 368.75287788737614M844.7 372.9L837.249906218299 368.75287788737614M844.7 372.9L823.5144878720982 389.40471256393323M830.6 394.1L823.5144878720982 389.40471256393323M830.6 394.1L806.5158558520365 415.15117860601515M813.5 420L806.5158558520365 415.15117860601515M813.5 420L793.6386099469474 429.97725994963355M801.1 437L793.6386099469474 429.97725994963355M801.1 437L777.2590958689937 440.9396125533402M783.8 451.3L777.2590958689937 440.9396125533402M783.8 451.3L763.5860084033544 445.8623451038923M763.6 460.7L763.5860084033544 445.8623451038923M763.6 460.7L749.9226316584164 440.97419250530737M743.3 451.3L749.9226316584164 440.97419250530737M743.3 451.3L735.5557773728705 430.9492068245478M728.9 439L735.5557773728705 430.9492068245478M728.9 439L720.6524072163904 421.0897396203143M714.4 427.4L720.6524072163904 421.0897396203143M714.4 427.4L713.6311542093385 413.00454523600837M706.9 418.2L713.6311542093385 413.00454523600837M706.9 418.2L698.4103129343878 392.1607180123496M691.2 396.7L698.4103129343878 392.1607180123496M691.2 396.7L685.1150237017918 367.4140117764958M677.5 371.2L685.1150237017918 367.4140117764958M677.5 371.2L675.4968523614695 346.4289106703379M667.6 349.6L675.4968523614695 346.4289106703379M667.6 349.6L669.0958345967852 327.97891828977754M660.8 330L669.0958345967852 327.97891828977754M660.8 330L666.3294187365285 308.9001882190418M657.9 310L666.3294187365285 308.9001882190418M657.9 310L663.4701716613586 284.25150653654225M655.0 285L663.4701716613586 284.25150653654225M655.0 285L662.1 261.74154352850826M653.6 262L662.1 261.74154352850826M653.6 262L662.1 249.2344443950661M653.6 245.9L662.1 249.2344443950661M653.6 245.9L670.5976019257488 240.07036388690557M663.8 234.9L670.5976019257488 240.07036388690557M663.8 234.9L680.4263433838304 224.1410242824287M672.5 220.8L680.4263433838304 224.1410242824287M672.5 220.8L685.5622207061548 203.59751499313126M677.2 202L685.5622207061548 203.59751499313126M677.2 202L686.6906500866846 195.13429463915708" fill="none" stroke="#2ee82e" stroke-width="0.7" stroke-opacity="0.75"/>
<polygon points="682.8,191.8 721.9,180.6 730.0,195.8 748.2,194.8 763.0,194.3 774.8,194.6 789.1,195.1 796.1,179.4 834.5,190.2 837.1,201.4 843.7,217.7 852.7,232.5 862.1,242.7 862.9,260.1 862.8,279.7 860.5,299.6 859.3,322.8 852.5,345.6 841.0,370.8 827.1,391.8 810.0,417.6 797.4,433.5 780.5,446.1 763.6,453.3 746.6,446.1 732.2,435.0 717.5,424.2 710.3,415.6 694.8,394.4 681.3,369.3 671.5,348.0 664.9,329.0 662.1,309.5 659.2,284.6 657.9,261.9 657.9,247.6 667.2,237.5 676.5,222.5 681.4,202.8" fill="none" stroke="#2ee82e" stroke-width="0.8" stroke-opacity="0.7"/>
<polygon points="679.0,188.5 723.9,175.6 732.8,190.6 748.0,189.8 763.0,189.3 775.0,189.6 786.1,190.0 793.9,174.4 838.1,186.8 841.2,200.1 847.5,215.8 856.1,229.9 866.3,240.9 867.2,260.0 867.0,280.0 864.7,300.0 863.5,323.5 856.5,347.1 844.7,372.9 830.6,394.1 813.5,420.0 801.1,437.0 783.8,451.3 763.6,460.7 743.3,451.3 728.9,439.0 714.4,427.4 706.9,418.2 691.2,396.7 677.5,371.2 667.6,349.6 660.8,330.0 657.9,310.0 655.0,285.0 653.6,262.0 653.6,245.9 663.8,234.9 672.5,220.8 677.2,202.0" fill="none" stroke="#2ee82e" stroke-width="1.2"/>
<path d="M723.8 235.5L742.0 220.7M703.1 389.2L690.0 365.0M767.8 266.9L754.2 268.8M853.2 260.3L847.2 259.0M698.4 392.2L703.1 389.2M831.0 193.6L833.1 202.7M717.4 192.0L724.3 206.6M754.2 268.8L743.4 286.5M807.5 348.8L821.0 345.0M724.5 417.2L742.0 413.0M761.0 236.5L780.8 220.7M685.1 367.4L690.0 365.0M717.4 192.0L691.0 204.6M667.6 261.6L667.6 251.4M708.2 328.4L721.4 331.0M821.0 345.0L833.0 348.0M727.3 200.9L724.3 206.6M708.2 328.4L693.8 349.1M858.5 279.5L856.2 299.3M821.0 345.0L801.4 331.0M667.6 251.4L675.0 243.4M724.8 259.0L697.4 267.8M673.8 263.9L697.4 267.8M748.4 199.8L748.7 205.3M662.1 249.2L667.6 251.4M856.2 299.3L855.1 322.1M826.3 198.0L827.8 204.3M824.7 265.9L810.9 281.5M754.2 239.4L767.8 266.9M697.4 267.8L673.8 285.5M767.8 266.9L779.6 284.5M784.0 354.0L789.7 359.3M670.6 240.1L675.0 243.4M827.8 204.3L834.9 222.1M793.5 368.6L792.5 384.3M807.5 348.8L803.5 363.0M793.6 430.0L802.0 412.0M802.0 412.0L779.5 398.6M725.9 364.7L733.1 359.3M684.6 237.5L701.3 248.2M743.4 286.5L761.4 291.0M839.9 219.6L834.9 222.1M777.3 440.9L763.6 445.9M818.8 246.3L817.4 234.0M858.7 260.2L852.6 246.7M701.3 248.2L675.6 259.0M849.6 321.1L843.4 342.2M796.5 364.7L789.7 359.3M822.7 305.0L829.0 312.9M697.4 289.4L711.9 281.5M802.0 412.0L785.0 412.0M761.0 236.5L742.0 220.7M849.3 235.1L834.5 235.5M727.3 200.9L717.4 192.0M749.9 441.0L739.1 426.7M789.6 426.2L785.0 412.0M829.0 358.0L829.0 349.1M718.0 352.9L721.4 331.0M754.2 239.4L766.9 239.4M853.0 279.1L846.3 282.5M822.7 305.0L817.7 325.9M833.1 202.7L827.8 204.3M784.0 354.0L801.4 331.0M731.7 278.6L743.3 263.4M793.6 430.0L777.3 440.9M772.0 354.0L761.4 371.0M844.3 304.0L840.7 324.6M807.5 348.8L809.0 357.0M729.8 384.3L761.4 371.0M729.8 384.3L743.3 398.6M669.0 283.8L673.8 285.5M795.5 205.8L795.3 234.5M855.1 322.1L849.6 321.1M718.0 352.9L740.0 354.0M698.4 392.2L685.1 367.4M824.7 218.8L834.5 235.5M685.6 203.6L694.4 219.8M848.5 344.1L843.4 342.2M834.9 222.1L824.7 218.8M667.6 251.4L675.6 259.0M685.1 367.4L675.5 346.4M691.0 204.6L694.4 219.8M774.3 436.3L763.6 439.8M817.7 325.9L829.0 312.9M763.1 204.8L780.8 220.7M792.2 200.2L801.3 191.0M772.0 354.0L761.4 291.0M802.0 412.0L804.5 386.0M789.7 359.3L761.4 371.0M740.0 354.0L761.4 371.0M725.9 364.7L728.8 368.6M727.3 200.9L748.4 199.8M844.9 238.4L834.5 235.5M763.6 439.8L752.9 436.3M677.8 306.9L682.7 327.5M701.4 307.8L693.8 312.9M761.4 371.0L733.1 359.3M763.6 445.9L763.6 439.8M748.4 199.8L763.0 199.3M752.9 436.3L755.0 423.0M662.1 249.2L670.6 240.1M840.7 324.6L829.0 312.9M853.2 260.3L846.3 262.0M749.9 441.0L752.9 436.3M670.6 240.1L680.4 224.1M718.0 352.9L733.1 359.3M822.7 305.0L844.3 304.0M804.5 386.0L810.9 380.5M833.1 202.7L826.3 198.0M731.7 278.6L711.9 281.5M718.0 409.6L743.3 398.6M680.6 344.4L674.5 326.7M772.0 354.0L789.7 359.3M701.3 248.2L697.4 267.8M675.5 346.4L680.6 344.4M839.9 219.6L849.3 235.1M669.1 328.0L674.5 326.7M763.1 204.8L774.5 205.1M824.7 265.9L846.3 282.5M779.6 284.5L761.4 291.0M748.7 205.3L742.0 220.7M829.0 358.0L809.0 357.0M697.4 289.4L701.4 307.8M774.7 199.6L774.5 205.1M817.7 325.9L801.4 331.0M674.5 326.7L677.8 306.9M831.0 193.6L801.3 191.0M754.2 239.4L743.3 263.4M763.1 204.8L742.0 220.7M849.3 235.1L852.6 246.7M818.8 246.3L824.7 265.9M701.4 307.8L721.4 331.0M685.1 367.4L690.6 349.0M675.0 243.4L684.6 237.5M724.3 206.6L694.4 219.8M795.3 234.5L766.9 239.4M840.7 324.6L833.0 348.0M796.3 259.0L810.9 281.5M752.0 354.0L761.4 371.0M718.0 352.9L714.1 361.8M680.4 224.1L684.6 237.5M833.1 202.7L839.9 219.6M856.2 299.3L853.0 279.1M731.7 278.6L733.1 302.7M748.7 205.3L763.1 204.8M818.8 246.3L796.3 259.0M697.4 267.8L675.6 259.0M772.0 354.0L801.4 331.0M823.5 389.4L802.0 412.0M833.0 348.0L829.0 358.0M718.0 367.6L711.9 380.5M724.3 206.6L723.8 235.5M763.0 199.3L763.1 204.8M855.1 322.1L848.5 344.1M777.3 440.9L789.6 426.2M850.7 298.8L844.3 304.0M844.9 238.4L847.2 259.0M824.7 265.9L824.7 287.5M673.8 285.5L697.4 289.4M752.0 354.0L761.4 291.0M763.6 439.8L772.0 422.0M680.4 224.1L685.6 226.3M817.7 325.9L821.0 345.0M697.4 289.4L677.8 306.9M844.9 238.4L852.6 246.7M718.0 367.6L729.8 384.3M701.3 248.2L723.8 235.5M697.4 267.8L711.9 281.5M849.6 321.1L844.3 304.0M849.3 235.1L844.9 238.4M796.3 259.0L824.7 265.9M763.6 445.9L749.9 441.0M723.8 235.5L724.8 259.0M840.7 324.6L821.0 345.0M704.3 346.1L718.0 352.9M795.5 205.8L827.8 204.3M749.9 441.0L735.6 430.9M803.5 363.0L793.5 368.6M690.6 349.0L693.8 349.1M832.4 366.1L818.9 386.4M834.5 235.5L818.8 246.3M804.5 386.0L792.5 384.3M837.2 368.8L832.4 366.1M675.5 346.4L669.1 328.0M818.8 246.3L795.3 234.5M767.8 266.9L761.4 291.0M832.4 366.1L810.9 380.5M669.1 328.0L666.3 308.9M735.6 430.9L724.5 417.2M739.1 426.7L724.5 417.2M752.0 354.0L733.1 302.7M721.4 331.0L733.1 302.7M728.8 368.6L733.1 359.3M803.5 363.0L789.7 359.3M774.7 199.6L792.2 200.2M723.8 235.5L705.4 234.0M718.0 409.6L717.0 386.3M714.1 361.8L725.9 364.7M761.0 236.5L766.9 239.4M720.7 421.1L724.5 417.2M718.0 367.6L728.8 368.6M685.1 367.4L703.1 389.2M793.5 368.6L761.4 371.0M686.7 195.1L717.4 192.0M680.6 344.4L682.7 327.5M766.9 239.4L780.8 220.7M755.0 423.0L772.0 422.0M724.3 206.6L691.0 204.6M663.5 284.3L667.6 261.6M821.0 345.0L829.0 349.1M728.8 368.6L729.8 384.3M795.5 205.8L826.3 198.0M839.9 219.6L834.5 235.5M789.4 278.6L781.6 294.3M731.7 278.6L743.4 286.5M803.5 363.0L796.5 364.7M723.8 235.5L743.3 263.4M824.7 287.5L844.3 304.0M670.6 240.1L667.6 251.4M809.0 357.0L810.9 380.5M752.9 436.3L739.1 426.7M701.4 307.8L708.2 328.4M785.0 412.0L779.5 398.6M763.0 199.3L774.7 199.6M839.9 219.6L827.8 204.3M801.4 331.0L789.7 302.7M735.6 430.9L739.1 426.7M680.4 224.1L685.6 203.6M850.7 298.8L846.3 282.5M795.3 234.5L817.4 234.0M728.8 368.6L761.4 371.0M666.3 308.9L673.8 285.5M674.5 326.7L671.8 308.2M817.7 325.9L840.7 324.6M727.3 200.9L742.0 220.7M849.3 235.1L858.0 244.4M822.7 305.0L810.9 281.5M697.4 289.4L693.8 312.9M793.5 368.6L789.7 359.3M772.0 422.0L779.5 398.6M844.3 304.0L829.0 312.9M774.5 205.1L795.5 205.8M677.8 306.9L693.8 312.9M742.0 413.0L743.3 398.6M754.2 239.4L761.0 236.5M837.2 368.8L823.5 389.4M824.7 265.9L847.2 259.0M675.0 243.4L675.6 259.0M843.4 342.2L840.7 324.6M739.1 426.7L755.0 423.0M824.7 287.5L822.7 305.0M774.5 205.1L780.8 220.7M690.0 365.0L690.6 349.0M696.5 359.8L693.8 349.1M703.1 389.2L711.9 380.5M807.5 348.8L789.7 359.3M779.5 398.6L743.3 398.6M766.9 239.4L779.5 263.4M675.5 346.4L690.6 349.0M821.0 345.0L809.0 357.0M666.3 308.9L671.8 308.2M731.7 278.6L739.5 294.3M789.6 426.2L772.0 422.0M781.6 294.3L789.7 302.7M809.0 357.0L803.5 363.0M848.5 344.1L849.6 321.1M724.3 206.6L742.0 220.7M714.1 361.8L718.0 367.6M792.2 200.2L795.5 205.8M832.4 366.1L809.0 357.0M834.5 235.5L847.2 259.0M837.2 368.8L829.0 358.0M761.4 371.0L743.3 398.6M852.6 246.7L853.2 260.3M846.3 262.0L846.3 282.5M682.7 327.5L693.8 312.9M742.0 413.0L755.0 423.0M858.7 260.2L853.0 279.1M690.6 349.0L696.5 359.8M749.9 441.0L763.6 439.8M685.6 226.3L684.6 237.5M853.0 279.1L846.3 262.0M789.4 278.6L810.9 281.5M784.0 354.0L772.0 354.0M739.1 426.7L742.0 413.0M696.5 359.8L711.9 380.5M739.5 294.3L761.4 291.0M802.0 412.0L792.5 384.3M735.6 430.9L720.7 421.1M727.3 200.9L748.7 205.3M673.8 263.9L673.8 285.5M666.3 308.9L674.5 326.7M684.6 237.5L705.4 234.0M669.0 283.8L673.8 263.9M848.5 344.1L837.2 368.8M781.6 294.3L761.4 291.0M774.7 199.6L763.1 204.8M685.6 203.6L691.0 204.6M843.4 342.2L833.0 348.0M852.6 246.7L847.2 259.0M713.6 413.0L703.1 389.2M690.0 365.0L696.5 359.8M792.2 200.2L774.5 205.1M671.8 308.2L677.8 306.9M858.0 244.4L852.6 246.7M837.2 368.8L833.0 348.0M691.7 199.4L691.0 204.6M796.3 259.0L779.5 263.4M761.4 371.0L779.5 398.6M724.8 259.0L731.7 278.6M682.7 327.5L693.8 349.1M858.7 260.2L853.2 260.3M696.5 359.8L714.1 361.8M718.0 409.6L742.0 413.0M717.0 386.3L729.8 384.3M789.4 278.6L779.5 263.4M818.9 386.4L802.0 412.0M823.5 389.4L818.9 386.4M739.5 294.3L733.1 302.7M824.7 218.8L817.4 234.0M740.0 354.0L721.4 331.0M848.5 344.1L833.0 348.0M795.3 234.5L796.3 259.0M754.2 268.8L743.3 263.4M806.5 415.2L802.0 412.0M666.3 308.9L663.5 284.3M824.7 265.9L846.3 262.0M704.3 346.1L721.4 331.0M718.0 352.9L725.9 364.7M704.3 346.1L693.8 349.1M795.5 205.8L824.7 218.8M684.6 237.5L675.6 259.0M724.5 417.2L718.0 409.6M733.1 302.7L761.4 291.0M792.2 200.2L798.4 184.5M733.1 302.7L711.9 281.5M796.5 364.7L793.5 368.6M817.7 325.9L789.7 302.7M824.7 287.5L810.9 281.5M766.9 239.4L767.8 266.9M713.6 413.0L718.0 409.6M708.2 328.4L704.3 346.1M691.7 199.4L717.4 192.0M669.0 283.8L667.6 261.6M719.9 185.6L717.4 192.0M662.1 261.7L667.6 251.4M779.6 284.5L779.5 263.4M680.4 224.1L694.4 219.8M667.6 261.6L675.6 259.0M804.5 386.0L793.5 368.6M685.6 226.3L694.4 219.8M789.4 278.6L789.7 302.7M674.5 326.7L682.7 327.5M834.9 222.1L834.5 235.5M823.5 389.4L832.4 366.1M685.6 226.3L705.4 234.0M772.0 354.0L789.7 302.7M740.0 354.0L733.1 359.3M682.7 327.5L690.6 349.0M833.0 348.0L829.0 349.1M754.2 268.8L761.4 291.0M701.4 307.8L711.9 281.5M723.8 235.5L754.2 239.4M818.9 386.4L810.9 380.5M752.0 354.0L721.4 331.0M846.3 282.5L844.3 304.0M685.6 203.6L691.7 199.4M803.5 363.0L810.9 380.5M856.2 299.3L849.6 321.1M703.1 389.2L717.0 386.3M718.0 367.6L725.9 364.7M686.7 195.1L691.7 199.4M827.8 204.3L824.7 218.8M754.2 239.4L742.0 220.7M713.6 413.0L724.5 417.2M858.0 244.4L858.7 260.2M690.0 365.0L711.9 380.5M675.5 346.4L674.5 326.7M671.8 308.2L673.8 285.5M818.9 386.4L804.5 386.0M779.6 284.5L781.6 294.3M792.5 384.3L761.4 371.0M663.5 284.3L669.0 283.8M858.7 260.2L858.5 279.5M795.5 205.8L801.3 191.0M789.4 278.6L779.6 284.5M777.3 440.9L763.6 439.8M663.5 284.3L673.8 285.5M662.1 261.7L667.6 261.6M763.6 439.8L755.0 423.0M801.3 191.0L826.3 198.0M718.0 409.6L729.8 384.3M739.5 294.3L743.4 286.5M798.4 184.5L801.3 191.0M724.8 259.0L743.3 263.4M823.5 389.4L806.5 415.2M795.5 205.8L817.4 234.0M831.0 193.6L826.3 198.0M849.6 321.1L840.7 324.6M806.5 415.2L793.6 430.0M740.0 354.0L752.0 354.0M853.2 260.3L853.0 279.1M682.7 327.5L708.2 328.4M701.4 307.8L733.1 302.7M704.3 346.1L714.1 361.8M755.0 423.0L743.3 398.6M853.0 279.1L850.7 298.8M858.5 279.5L853.0 279.1M795.3 234.5L780.8 220.7M846.3 262.0L847.2 259.0M720.7 421.1L713.6 413.0M856.2 299.3L850.7 298.8M673.8 263.9L675.6 259.0M713.6 413.0L698.4 392.2M718.0 367.6L717.0 386.3M714.1 361.8L711.9 380.5M686.7 195.1L685.6 203.6M793.5 368.6L810.9 380.5M767.8 266.9L779.5 263.4M789.6 426.2L774.3 436.3M719.9 185.6L727.3 200.9M792.5 384.3L779.5 398.6M774.3 436.3L772.0 422.0M777.3 440.9L774.3 436.3M752.0 354.0L772.0 354.0M673.8 285.5L677.8 306.9M824.7 287.5L846.3 282.5M670.6 240.1L684.6 237.5M724.8 259.0L711.9 281.5M789.7 302.7L810.9 281.5M785.0 412.0L772.0 422.0M795.5 205.8L780.8 220.7M701.3 248.2L724.8 259.0M680.6 344.4L690.6 349.0M807.5 348.8L801.4 331.0M821.0 345.0L829.0 358.0M708.2 328.4L693.8 312.9M694.4 219.8L705.4 234.0M704.3 346.1L696.5 359.8M755.0 423.0L779.5 398.6M748.4 199.8L763.1 204.8M763.1 204.8L761.0 236.5M754.2 239.4L754.2 268.8M802.0 412.0L789.6 426.2M697.4 267.8L697.4 289.4M724.3 206.6L705.4 234.0M686.7 195.1L719.9 185.6M822.7 305.0L789.7 302.7M717.0 386.3L711.9 380.5M796.3 259.0L789.4 278.6M832.4 366.1L829.0 358.0M856.2 299.3L844.3 304.0M793.6 430.0L789.6 426.2M807.5 348.8L784.0 354.0M834.5 235.5L817.4 234.0M663.5 284.3L662.1 261.7M743.4 286.5L743.3 263.4M818.8 246.3L847.2 259.0M667.6 261.6L673.8 263.9M662.1 261.7L662.1 249.2M701.3 248.2L705.4 234.0M718.0 409.6L703.1 389.2M761.4 291.0L789.7 302.7M795.3 234.5L779.5 263.4M798.4 184.5L831.0 193.6" fill="none" stroke="#2ee82e" stroke-width="0.8" stroke-opacity="0.9"/>
<polyline points="684.6,237.5 694.4,219.8 723.8,235.5" fill="none" stroke="#2ee82e" stroke-width="3.4" stroke-linejoin="round"/>
<polyline points="684.6,237.5 701.3,248.2" fill="none" stroke="#2ee82e" stroke-width="3.4" stroke-linejoin="round"/>
<polyline points="723.8,235.5 724.8,259.0 731.7,278.6 739.5,294.3" fill="none" stroke="#2ee82e" stroke-width="3.4" stroke-linejoin="round"/>
<polyline points="795.3,234.5 824.7,218.8 834.5,235.5 818.8,246.3" fill="none" stroke="#2ee82e" stroke-width="3.4" stroke-linejoin="round"/>
<polyline points="795.3,234.5 796.3,259.0 789.4,278.6 781.6,294.3" fill="none" stroke="#2ee82e" stroke-width="3.4" stroke-linejoin="round"/>
<polyline points="754.2,268.8 754.2,239.4 761.0,236.5 766.9,239.4 767.8,266.9" fill="none" stroke="#2ee82e" stroke-width="3.4" stroke-linejoin="round"/>
<polyline points="754.2,268.8 743.4,286.5 739.5,294.3" fill="none" stroke="#2ee82e" stroke-width="3.4" stroke-linejoin="round"/>
<polyline points="767.8,266.9 779.6,284.5 781.6,294.3" fill="none" stroke="#2ee82e" stroke-width="3.4" stroke-linejoin="round"/>
<polyline points="673.8,263.9 697.4,267.8" fill="none" stroke="#2ee82e" stroke-width="3.4" stroke-linejoin="round"/>
<polyline points="673.8,285.5 697.4,289.4" fill="none" stroke="#2ee82e" stroke-width="3.4" stroke-linejoin="round"/>
<polyline points="677.8,306.9 701.4,307.8" fill="none" stroke="#2ee82e" stroke-width="3.4" stroke-linejoin="round"/>
<polyline points="682.7,327.5 708.2,328.4" fill="none" stroke="#2ee82e" stroke-width="3.4" stroke-linejoin="round"/>
<polyline points="690.6,349.0 704.3,346.1 718.0,352.9" fill="none" stroke="#2ee82e" stroke-width="3.4" stroke-linejoin="round"/>
<polyline points="696.5,359.8 714.1,361.8 718.0,367.6 717.0,386.3" fill="none" stroke="#2ee82e" stroke-width="3.4" stroke-linejoin="round"/>
<polyline points="725.9,364.7 728.8,368.6 729.8,384.3" fill="none" stroke="#2ee82e" stroke-width="3.4" stroke-linejoin="round"/>
<polyline points="824.7,265.9 846.3,262.0" fill="none" stroke="#2ee82e" stroke-width="3.4" stroke-linejoin="round"/>
<polyline points="824.7,287.5 846.3,282.5" fill="none" stroke="#2ee82e" stroke-width="3.4" stroke-linejoin="round"/>
<polyline points="822.7,305.0 844.3,304.0" fill="none" stroke="#2ee82e" stroke-width="3.4" stroke-linejoin="round"/>
<polyline points="817.7,325.9 840.7,324.6" fill="none" stroke="#2ee82e" stroke-width="3.4" stroke-linejoin="round"/>
<polyline points="807.5,348.8 821.0,345.0 833.0,348.0" fill="none" stroke="#2ee82e" stroke-width="3.4" stroke-linejoin="round"/>
<polyline points="829.0,358.0 809.0,357.0 803.5,363.0 804.5,386.0" fill="none" stroke="#2ee82e" stroke-width="3.4" stroke-linejoin="round"/>
<polyline points="796.5,364.7 793.5,368.6 792.5,384.3" fill="none" stroke="#2ee82e" stroke-width="3.4" stroke-linejoin="round"/>
<polyline points="740.0,354.0 742.0,413.0 755.0,423.0" fill="none" stroke="#2ee82e" stroke-width="3.4" stroke-linejoin="round"/>
<polyline points="752.0,354.0 755.0,423.0" fill="none" stroke="#2ee82e" stroke-width="3.4" stroke-linejoin="round"/>
<polyline points="784.0,354.0 785.0,412.0 772.0,422.0" fill="none" stroke="#2ee82e" stroke-width="3.4" stroke-linejoin="round"/>
<polyline points="772.0,354.0 772.0,422.0" fill="none" stroke="#2ee82e" stroke-width="3.4" stroke-linejoin="round"/>
<polyline points="684.6,237.5 694.4,219.8 723.8,235.5" fill="none" stroke="#aaaaaa" stroke-width="1.9" stroke-linejoin="round"/>
<polyline points="684.6,237.5 701.3,248.2" fill="none" stroke="#aaaaaa" stroke-width="1.9" stroke-linejoin="round"/>
<polyline points="723.8,235.5 724.8,259.0 731.7,278.6 739.5,294.3" fill="none" stroke="#aaaaaa" stroke-width="1.9" stroke-linejoin="round"/>
<polyline points="795.3,234.5 824.7,218.8 834.5,235.5 818.8,246.3" fill="none" stroke="#aaaaaa" stroke-width="1.9" stroke-linejoin="round"/>
<polyline points="795.3,234.5 796.3,259.0 789.4,278.6 781.6,294.3" fill="none" stroke="#aaaaaa" stroke-width="1.9" stroke-linejoin="round"/>
<polyline points="754.2,268.8 754.2,239.4 761.0,236.5 766.9,239.4 767.8,266.9" fill="none" stroke="#aaaaaa" stroke-width="1.9" stroke-linejoin="round"/>
<polyline points="754.2,268.8 743.4,286.5 739.5,294.3" fill="none" stroke="#aaaaaa" stroke-width="1.9" stroke-linejoin="round"/>
<polyline points="767.8,266.9 779.6,284.5 781.6,294.3" fill="none" stroke="#aaaaaa" stroke-width="1.9" stroke-linejoin="round"/>
<polyline points="673.8,263.9 697.4,267.8" fill="none" stroke="#aaaaaa" stroke-width="1.9" stroke-linejoin="round"/>
<polyline points="673.8,285.5 697.4,289.4" fill="none" stroke="#aaaaaa" stroke-width="1.9" stroke-linejoin="round"/>
<polyline points="677.8,306.9 701.4,307.8" fill="none" stroke="#aaaaaa" stroke-width="1.9" stroke-linejoin="round"/>
<polyline points="682.7,327.5 708.2,328.4" fill="none" stroke="#aaaaaa" stroke-width="1.9" stroke-linejoin="round"/>
<polyline points="690.6,349.0 704.3,346.1 718.0,352.9" fill="none" stroke="#aaaaaa" stroke-width="1.9" stroke-linejoin="round"/>
<polyline points="696.5,359.8 714.1,361.8 718.0,367.6 717.0,386.3" fill="none" stroke="#aaaaaa" stroke-width="1.9" stroke-linejoin="round"/>
<polyline points="725.9,364.7 728.8,368.6 729.8,384.3" fill="none" stroke="#aaaaaa" stroke-width="1.9" stroke-linejoin="round"/>
<polyline points="824.7,265.9 846.3,262.0" fill="none" stroke="#aaaaaa" stroke-width="1.9" stroke-linejoin="round"/>
<polyline points="824.7,287.5 846.3,282.5" fill="none" stroke="#aaaaaa" stroke-width="1.9" stroke-linejoin="round"/>
<polyline points="822.7,305.0 844.3,304.0" fill="none" stroke="#aaaaaa" stroke-width="1.9" stroke-linejoin="round"/>
<polyline points="817.7,325.9 840.7,324.6" fill="none" stroke="#aaaaaa" stroke-width="1.9" stroke-linejoin="round"/>
<polyline points="807.5,348.8 821.0,345.0 833.0,348.0" fill="none" stroke="#aaaaaa" stroke-width="1.9" stroke-linejoin="round"/>
<polyline points="829.0,358.0 809.0,357.0 803.5,363.0 804.5,386.0" fill="none" stroke="#aaaaaa" stroke-width="1.9" stroke-linejoin="round"/>
<polyline points="796.5,364.7 793.5,368.6 792.5,384.3" fill="none" stroke="#aaaaaa" stroke-width="1.9" stroke-linejoin="round"/>
<polyline points="740.0,354.0 742.0,413.0 755.0,423.0" fill="none" stroke="#aaaaaa" stroke-width="1.9" stroke-linejoin="round"/>
<polyline points="752.0,354.0 755.0,423.0" fill="none" stroke="#aaaaaa" stroke-width="1.9" stroke-linejoin="round"/>
<polyline points="784.0,354.0 785.0,412.0 772.0,422.0" fill="none" stroke="#aaaaaa" stroke-width="1.9" stroke-linejoin="round"/>
<polyline points="772.0,354.0 772.0,422.0" fill="none" stroke="#aaaaaa" stroke-width="1.9" stroke-linejoin="round"/>
<polygon points="691.7,199.4 717.4,192.0 724.3,206.6 748.7,205.3 763.1,204.8 774.5,205.1 795.5,205.8 801.3,191.0 826.3,198.0 827.8,204.3 834.9,222.1 844.9,238.4 852.6,246.7 853.2,260.3 853.0,279.1 850.7,298.8 849.6,321.1 843.4,342.2 832.4,366.1 818.9,386.4 802.0,412.0 789.6,426.2 774.3,436.3 763.6,439.8 752.9,436.3 739.1,426.7 724.5,417.2 718.0,409.6 703.1,389.2 690.0,365.0 680.6,344.4 674.5,326.7 671.8,308.2 669.0,283.8 667.6,261.6 667.6,251.4 675.0,243.4 685.6,226.3 691.0,204.6" fill="none" stroke="#2ee82e" stroke-width="1.1"/>
<polygon points="686.7,195.1 719.9,185.6 727.3,200.9 748.4,199.8 763.0,199.3 774.7,199.6 792.2,200.2 798.4,184.5 831.0,193.6 833.1,202.7 839.9,219.6 849.3,235.1 858.0,244.4 858.7,260.2 858.5,279.5 856.2,299.3 855.1,322.1 848.5,344.1 837.2,368.8 823.5,389.4 806.5,415.2 793.6,430.0 777.3,440.9 763.6,445.9 749.9,441.0 735.6,430.9 720.7,421.1 713.6,413.0 698.4,392.2 685.1,367.4 675.5,346.4 669.1,328.0 666.3,308.9 663.5,284.3 662.1,261.7 662.1,249.2 670.6,240.1 680.4,224.1 685.6,203.6" fill="none" stroke="#1ef01e" stroke-width="2.6"/>
<circle cx="761.4" cy="332.5" r="38" fill="none" stroke="#2ee82e" stroke-width="0.8" stroke-opacity="0.85"/>
<circle cx="761.4" cy="332.5" r="14.5" fill="#2ee82e"/>
<path d="M764.4 332.5L772.7 334.8M764.2 333.6L770.9 338.9M763.5 334.6L767.8 342.1M762.5 335.3L763.6 343.8M761.4 335.5L759.1 343.8M760.3 335.3L755.0 342.0M759.3 334.6L751.8 338.9M758.6 333.6L750.1 334.7M758.4 332.5L750.1 330.2M758.6 331.4L751.9 326.1M759.3 330.4L755.0 322.9M760.3 329.7L759.2 321.2M761.4 329.5L763.7 321.2M762.5 329.7L767.8 323.0M763.5 330.4L771.0 326.1M764.2 331.4L772.7 330.3" stroke="#d8fcd8" stroke-width="0.7" fill="none"/>
<circle cx="770.4" cy="332.5" r="1.6" fill="none" stroke="#e0fce0" stroke-width="0.7"/><circle cx="769.7" cy="335.9" r="1.6" fill="none" stroke="#e0fce0" stroke-width="0.7"/><circle cx="767.8" cy="338.9" r="1.6" fill="none" stroke="#e0fce0" stroke-width="0.7"/><circle cx="764.8" cy="340.8" r="1.6" fill="none" stroke="#e0fce0" stroke-width="0.7"/><circle cx="761.4" cy="341.5" r="1.6" fill="none" stroke="#e0fce0" stroke-width="0.7"/><circle cx="758.0" cy="340.8" r="1.6" fill="none" stroke="#e0fce0" stroke-width="0.7"/><circle cx="755.0" cy="338.9" r="1.6" fill="none" stroke="#e0fce0" stroke-width="0.7"/><circle cx="753.1" cy="335.9" r="1.6" fill="none" stroke="#e0fce0" stroke-width="0.7"/><circle cx="752.4" cy="332.5" r="1.6" fill="none" stroke="#e0fce0" stroke-width="0.7"/><circle cx="753.1" cy="329.1" r="1.6" fill="none" stroke="#e0fce0" stroke-width="0.7"/><circle cx="755.0" cy="326.1" r="1.6" fill="none" stroke="#e0fce0" stroke-width="0.7"/><circle cx="758.0" cy="324.2" r="1.6" fill="none" stroke="#e0fce0" stroke-width="0.7"/><circle cx="761.4" cy="323.5" r="1.6" fill="none" stroke="#e0fce0" stroke-width="0.7"/><circle cx="764.8" cy="324.2" r="1.6" fill="none" stroke="#e0fce0" stroke-width="0.7"/><circle cx="767.8" cy="326.1" r="1.6" fill="none" stroke="#e0fce0" stroke-width="0.7"/><circle cx="769.7" cy="329.1" r="1.6" fill="none" stroke="#e0fce0" stroke-width="0.7"/>
<circle cx="766.0" cy="334.4" r="1.1" fill="#c8f8c8"/><circle cx="763.3" cy="337.1" r="1.1" fill="#c8f8c8"/><circle cx="759.5" cy="337.1" r="1.1" fill="#c8f8c8"/><circle cx="756.8" cy="334.4" r="1.1" fill="#c8f8c8"/><circle cx="756.8" cy="330.6" r="1.1" fill="#c8f8c8"/><circle cx="759.5" cy="327.9" r="1.1" fill="#c8f8c8"/><circle cx="763.3" cy="327.9" r="1.1" fill="#c8f8c8"/><circle cx="766.0" cy="330.6" r="1.1" fill="#c8f8c8"/>
<circle cx="761.4" cy="332.5" r="2.6" fill="#18d818"/>
<circle cx="712" cy="195" r="3.5" fill="#20e020"/><circle cx="712" cy="195" r="1.4" fill="#70f070"/>
<circle cx="805.8" cy="193.3" r="3.5" fill="#20e020"/><circle cx="805.8" cy="193.3" r="1.4" fill="#70f070"/>
<circle cx="674.8" cy="249.4" r="3.5" fill="#20e020"/><circle cx="674.8" cy="249.4" r="1.4" fill="#70f070"/>
<circle cx="844.5" cy="246.5" r="3.5" fill="#20e020"/><circle cx="844.5" cy="246.5" r="1.4" fill="#70f070"/>
<circle cx="763.2" cy="433" r="3.4" fill="#f4f4f4" stroke="#22e022" stroke-width="1.4"/><circle cx="763.2" cy="433" r="1.3" fill="#22e022"/>
</g></svg>
</body></html>
